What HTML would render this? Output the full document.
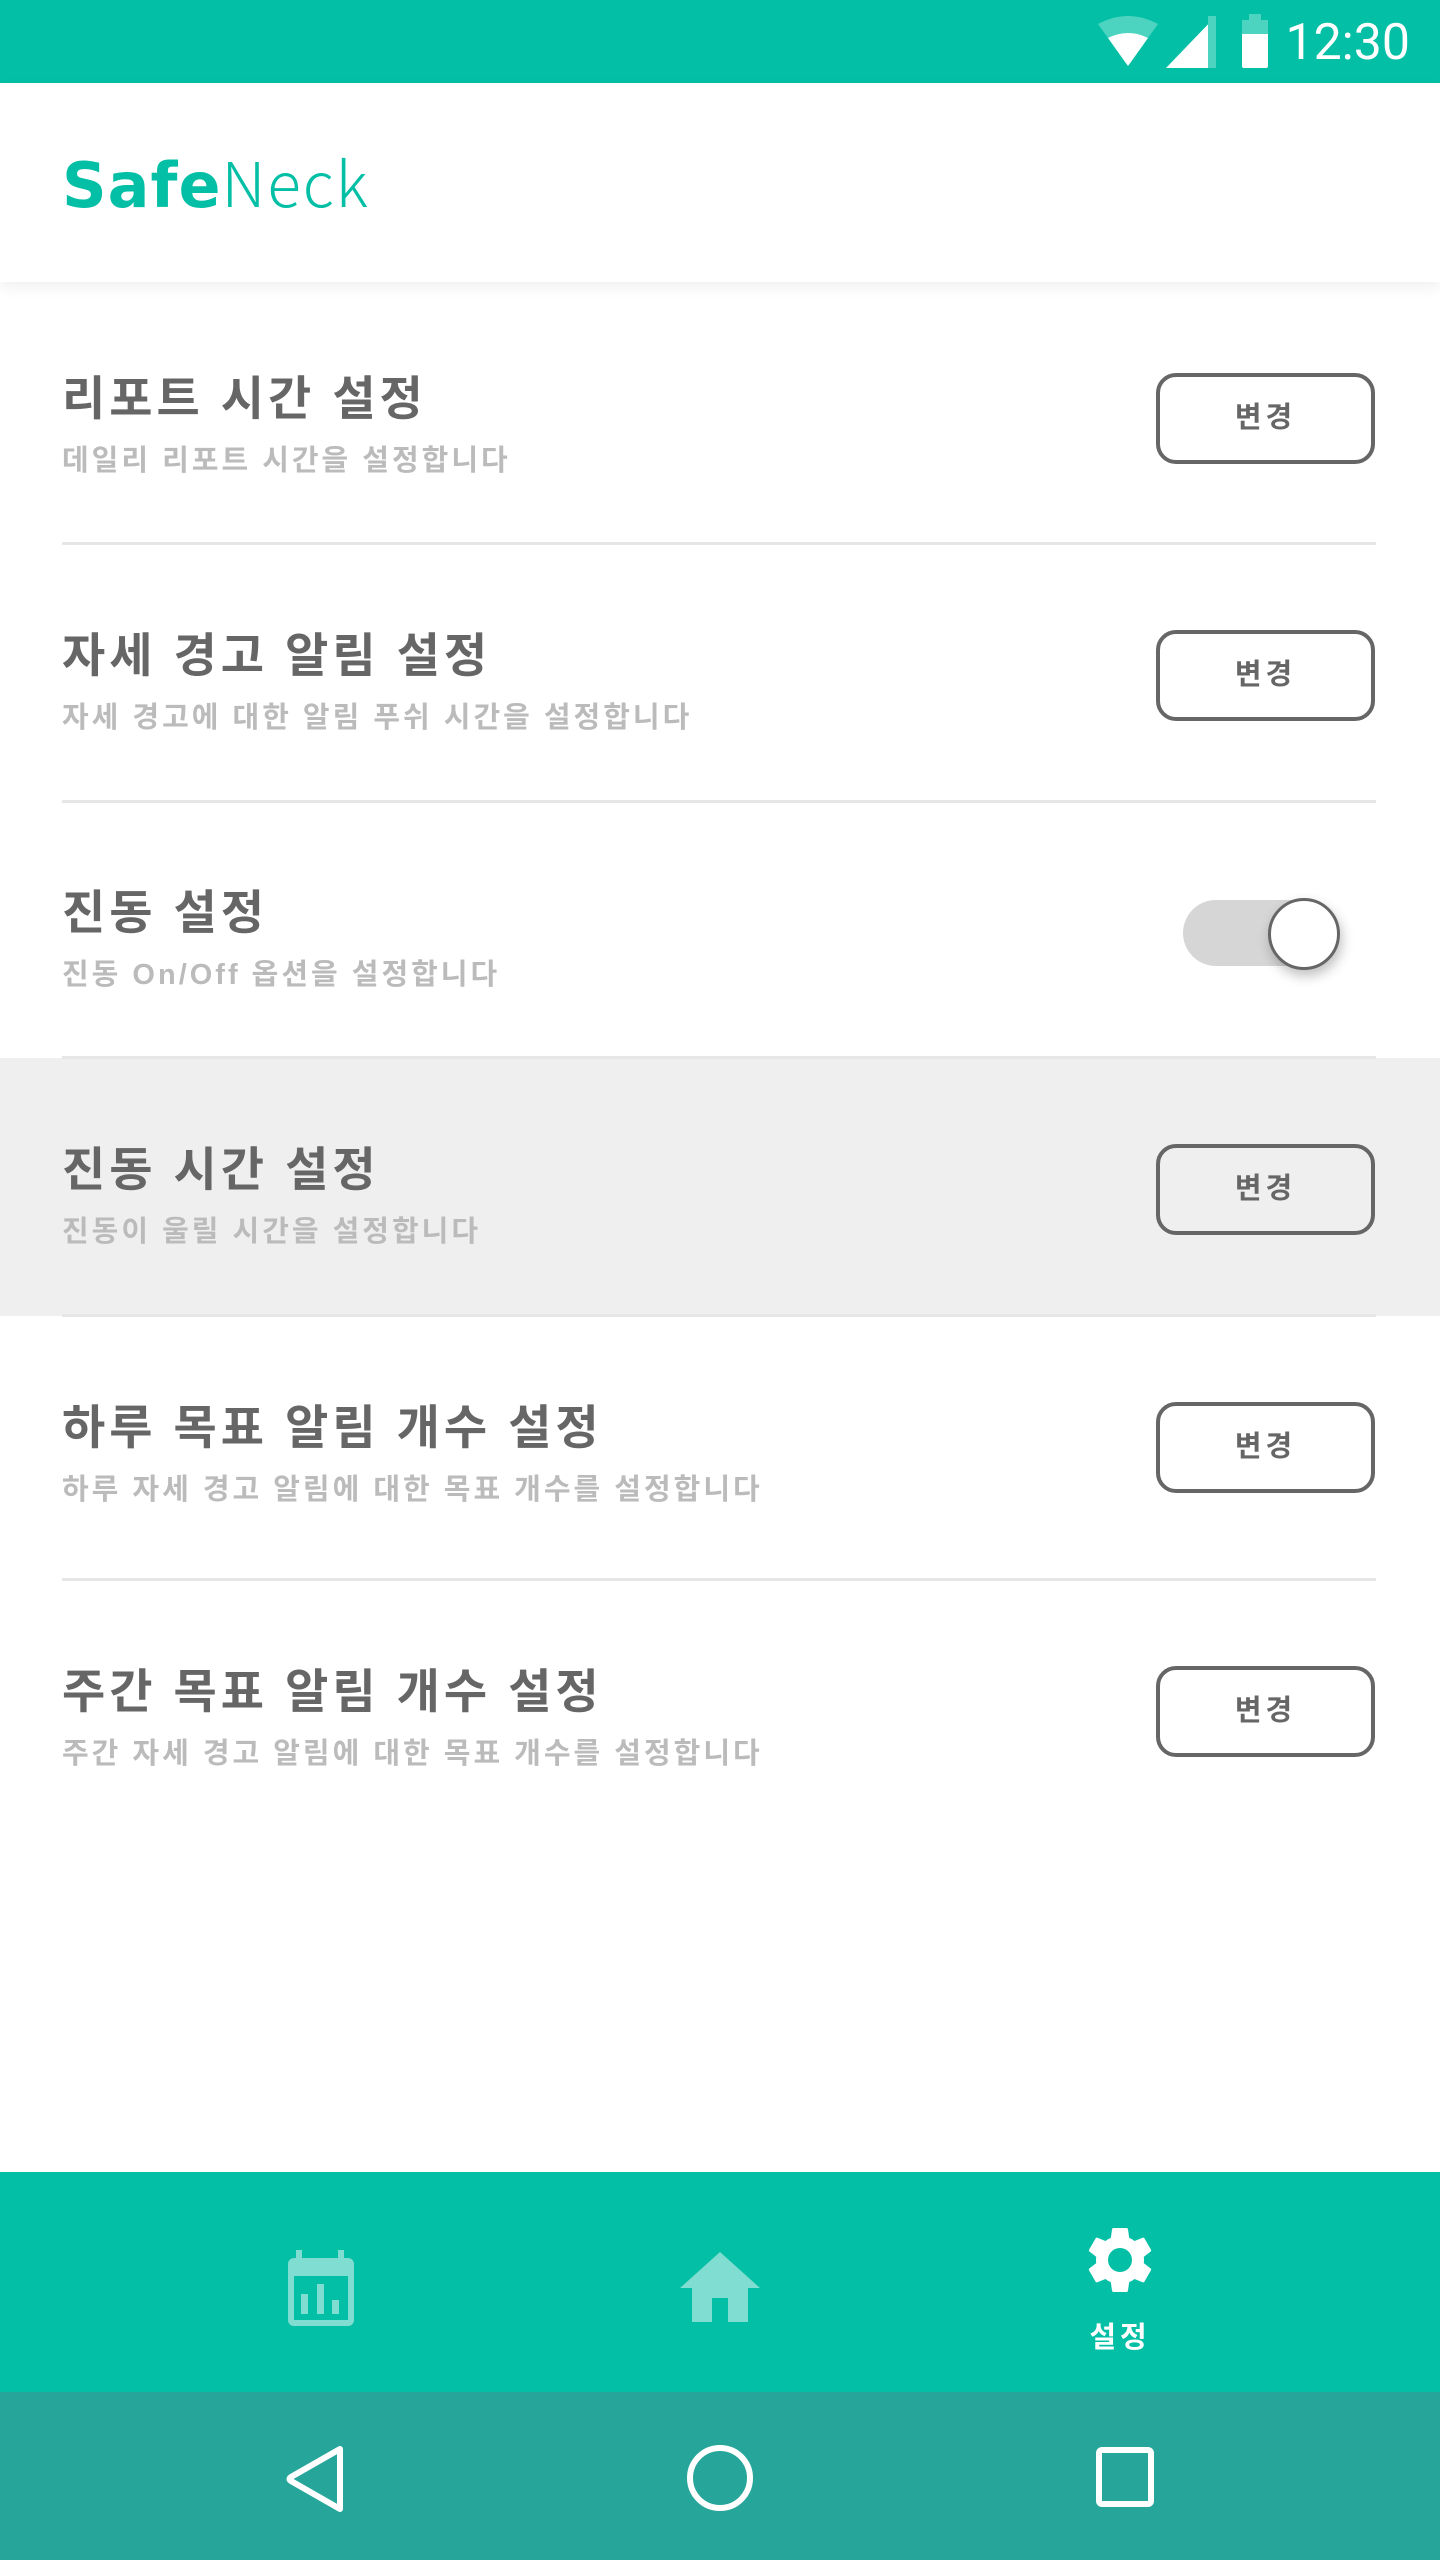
<!DOCTYPE html>
<html><head><meta charset="utf-8"><style>
*{margin:0;padding:0;box-sizing:border-box}
body{width:1440px;height:2560px;position:relative;background:#fff;font-family:"Liberation Sans","Noto Sans CJK KR",sans-serif;overflow:hidden}
.status{position:absolute;left:0;top:0;width:1440px;height:83px;background:#02bfa5}
.time{position:absolute;right:30px;top:14px;color:#fff;font-size:50px;font-family:"Roboto","Liberation Sans",sans-serif}
.appbar{position:absolute;left:0;top:83px;width:1440px;height:199px;background:#fff;box-shadow:0 6px 14px rgba(0,0,0,0.06);z-index:2}
.logo{position:absolute;left:62px;top:52px;font-size:62px;color:#02bfa5;letter-spacing:2px;font-family:"DejaVu Sans","Liberation Sans",sans-serif}
.logo b{font-weight:bold;letter-spacing:1px}.logo span{font-weight:200;font-family:"Noto Sans CJK KR","Liberation Sans",sans-serif;letter-spacing:2px}
.row{position:absolute;left:0;width:1440px;height:257px}
.row .t{position:absolute;left:62px;top:73px;font-size:47px;font-weight:bold;color:#666;letter-spacing:4px}
.row .s{position:absolute;left:62px;top:150px;font-size:29px;font-weight:bold;color:#bbb;letter-spacing:3px}
.btn{position:absolute;left:1156px;top:86px;width:219px;height:91px;border:4px solid #666;border-radius:20px;font-size:29px;font-weight:bold;color:#666;text-align:center;line-height:82px;letter-spacing:4px}
.div{position:absolute;left:62px;width:1314px;height:3px;background:#e6e6e6}
.nav{position:absolute;left:0;top:2172px;width:1440px;height:220px;background:#02bfa5}
.sys{position:absolute;left:0;top:2392px;width:1440px;height:168px;background:#26a69a}
</style></head><body>
<div class="status">
<svg style="position:absolute;left:1096px;top:14px" width="220" height="56" viewBox="0 0 220 56">
<path d="M2 10 Q32 -6 62 10 L32 52 Z" fill="#4dd4c0"/>
<path d="M12 24 Q32 14 52 24 L32 52 Z" fill="#fff"/>
<path d="M120 2 L120 54 L70 54 Z" fill="#fff"/>
<rect x="112" y="2" width="8" height="52" fill="#4dd4c0"/>
<rect x="146" y="6" width="26" height="48" rx="2" fill="#fff"/>
<rect x="146" y="6" width="26" height="14" fill="#4dd4c0"/>
<rect x="153" y="0" width="12" height="7" fill="#4dd4c0"/>
</svg>
<div class="time">12:30</div>
</div>
<div class="appbar"><div class="logo"><b>Safe</b><span>Neck</span></div></div>

<div class="row" style="top:287px"><div class="t">리포트 시간 설정</div><div class="s">데일리 리포트 시간을 설정합니다</div><div class="btn">변경</div></div>
<div class="div" style="top:542px"></div>
<div class="row" style="top:544px"><div class="t">자세 경고 알림 설정</div><div class="s">자세 경고에 대한 알림 푸쉬 시간을 설정합니다</div><div class="btn">변경</div></div>
<div class="div" style="top:800px"></div>
<div class="row" style="top:801px"><div class="t">진동 설정</div><div class="s">진동 On/Off 옵션을 설정합니다</div>
<div style="position:absolute;left:1183px;top:99px;width:140px;height:66px;border-radius:33px;background:#d6d6d6"></div>
<div style="position:absolute;left:1268px;top:97px;width:72px;height:72px;border-radius:50%;background:#fff;border:3px solid #666;box-shadow:2px 6px 12px rgba(0,0,0,0.25)"></div>
</div>
<div class="row" style="top:1058px;background:#efefef;height:258px"><div class="t">진동 시간 설정</div><div class="s">진동이 울릴 시간을 설정합니다</div><div class="btn">변경</div></div>
<div class="div" style="top:1056px;left:62px"></div>
<div class="div" style="top:1314px"></div>
<div class="row" style="top:1316px"><div class="t">하루 목표 알림 개수 설정</div><div class="s">하루 자세 경고 알림에 대한 목표 개수를 설정합니다</div><div class="btn">변경</div></div>
<div class="div" style="top:1578px"></div>
<div class="row" style="top:1580px"><div class="t">주간 목표 알림 개수 설정</div><div class="s">주간 자세 경고 알림에 대한 목표 개수를 설정합니다</div><div class="btn">변경</div></div>

<div class="nav">
<svg style="position:absolute;left:286px;top:78px" width="70" height="76" viewBox="0 0 70 76">
<rect x="10" y="0" width="6" height="12" fill="#80ddd1"/><rect x="52" y="0" width="6" height="12" fill="#80ddd1"/>
<rect x="2" y="8" width="66" height="68" rx="6" fill="#80ddd1"/>
<rect x="8" y="26" width="54" height="44" fill="#02bfa5"/>
<rect x="15" y="44" width="7" height="20" fill="#80ddd1"/><rect x="31" y="34" width="7" height="30" fill="#80ddd1"/><rect x="46" y="50" width="7" height="14" fill="#80ddd1"/>
</svg>
<svg style="position:absolute;left:680px;top:80px" width="80" height="70" viewBox="0 0 80 70">
<path d="M40 0 L80 36 L68 36 L68 70 L48 70 L48 46 L32 46 L32 70 L12 70 L12 36 L0 36 Z" fill="#80ddd1"/>
</svg>
<svg style="position:absolute;left:1080px;top:48px" width="80" height="80" viewBox="0 0 24 24">
<path fill="#fff" d="M19.14 12.94c.04-.3.06-.61.06-.94s-.02-.64-.07-.94l2.030-1.58a.49.49 0 0 0 .12-.61l-1.92-3.32a.49.49 0 0 0-.59-.22l-2.39.96c-.5-.38-1.03-.7-1.620-.94l-.36-2.54a.48.48 0 0 0-.48-.41h-3.84a.48.48 0 0 0-.47.41l-.36 2.54c-.59.24-1.13.57-1.62.94l-2.39-.96a.48.48 0 0 0-.59.22L2.74 8.87a.47.47 0 0 0 .12.61l2.03 1.58c-.05.3-.09.63-.09.94s.02.64.07.94l-2.03 1.58a.49.49 0 0 0-.12.61l1.92 3.32c.12.22.37.29.59.22l2.39-.96c.5.38 1.03.7 1.62.94l.36 2.54c.05.24.24.41.48.41h3.84c.24 0 .44-.17.47-.41l.36-2.54c.59-.24 1.13-.56 1.62-.94l2.39.96c.22.08.47 0 .59-.22l1.92-3.32a.47.47 0 0 0-.12-.61l-2.010-1.58zM12 15.6A3.6 3.6 0 1 1 12 8.4a3.6 3.6 0 0 1 0 7.2z"/>
</svg>
<div style="position:absolute;left:1060px;top:142px;width:120px;text-align:center;color:#fff;font-size:29px;font-weight:bold;letter-spacing:4px">설정</div>
</div>
<div class="sys">
<svg style="position:absolute;left:285px;top:54px" width="60" height="66" viewBox="0 0 60 66"><path d="M55 3 L55 63 L6 35 Q3 33 6 31 Z" fill="none" stroke="#fff" stroke-width="6" stroke-linejoin="round"/></svg>
<svg style="position:absolute;left:686px;top:52px" width="68" height="68" viewBox="0 0 68 68"><circle cx="34" cy="34" r="30" fill="none" stroke="#fff" stroke-width="6"/></svg>
<svg style="position:absolute;left:1096px;top:55px" width="58" height="60" viewBox="0 0 58 60"><rect x="3" y="3" width="52" height="54" rx="3" fill="none" stroke="#fff" stroke-width="6"/></svg>
</div>
</body></html>
